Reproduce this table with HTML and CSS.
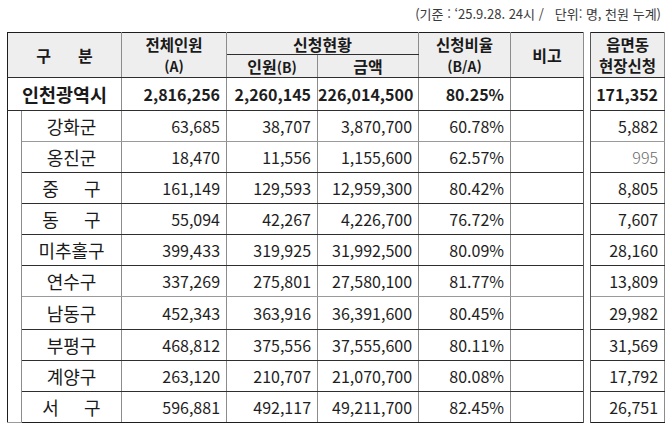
FILE: index.html
```html
<!DOCTYPE html>
<html lang="ko">
<head>
<meta charset="utf-8">
<title>신청현황</title>
<link rel="stylesheet" href="styles.css">
</head>
<body>
<div class="page">
  <p class="note">(기준 : ‘25.9.28. 24시 /&nbsp;&nbsp;&nbsp;단위: 명, 천원 누계)</p>
  <table class="stats">
    <colgroup>
      <col class="c-indent">
      <col class="c-name">
      <col class="c-total">
      <col class="c-people">
      <col class="c-amount">
      <col class="c-ratio">
      <col class="c-note">
      <col class="c-gap">
      <col class="c-site">
    </colgroup>
    <tbody>
      <tr class="h1">
        <th class="hd outer-l" colspan="2" rowspan="2">구&nbsp;&nbsp;&nbsp;&nbsp;&nbsp;&nbsp;분</th>
        <th class="hd two" rowspan="2">전체인원<br><span class="lat">(A)</span></th>
        <th class="hd" colspan="2">신청현황</th>
        <th class="hd two" rowspan="2">신청비율<br><span class="lat">(B/A)</span></th>
        <th class="hd" rowspan="2">비고</th>
        <td class="gap" rowspan="13"></td>
        <th class="hd two" rowspan="2">읍면동<br>현장신청</th>
      </tr>
      <tr class="h2">
        <th class="hd">인원<span class="lat">(B)</span></th>
        <th class="hd">금액</th>
      </tr>
      <tr class="total">
        <th class="name big outer-l" colspan="2">인천광역시</th>
        <td>2,816,256</td>
        <td>2,260,145</td>
        <td>226,014,500</td>
        <td>80.25%</td>
        <td class="empty"></td>
        <td>171,352</td>
      </tr>
      <tr class="row light">
        <td class="indent outer-l" rowspan="10"></td>
        <th class="name">강화군</th>
        <td>63,685</td>
        <td>38,707</td>
        <td>3,870,700</td>
        <td>60.78%</td>
        <td class="empty"></td>
        <td>5,882</td>
      </tr>
      <tr class="row">
        <th class="name">옹진군</th>
        <td>18,470</td>
        <td>11,556</td>
        <td>1,155,600</td>
        <td>62.57%</td>
        <td class="empty"></td>
        <td class="thin">995</td>
      </tr>
      <tr class="row">
        <th class="name">중&nbsp;&nbsp;&nbsp;&nbsp;&nbsp;구</th>
        <td>161,149</td>
        <td>129,593</td>
        <td>12,959,300</td>
        <td>80.42%</td>
        <td class="empty"></td>
        <td>8,805</td>
      </tr>
      <tr class="row">
        <th class="name">동&nbsp;&nbsp;&nbsp;&nbsp;&nbsp;구</th>
        <td>55,094</td>
        <td>42,267</td>
        <td>4,226,700</td>
        <td>76.72%</td>
        <td class="empty"></td>
        <td>7,607</td>
      </tr>
      <tr class="row">
        <th class="name">미추홀구</th>
        <td>399,433</td>
        <td>319,925</td>
        <td>31,992,500</td>
        <td>80.09%</td>
        <td class="empty"></td>
        <td>28,160</td>
      </tr>
      <tr class="row light">
        <th class="name">연수구</th>
        <td>337,269</td>
        <td>275,801</td>
        <td>27,580,100</td>
        <td>81.77%</td>
        <td class="empty"></td>
        <td>13,809</td>
      </tr>
      <tr class="row tall">
        <th class="name">남동구</th>
        <td>452,343</td>
        <td>363,916</td>
        <td>36,391,600</td>
        <td>80.45%</td>
        <td class="empty"></td>
        <td>29,982</td>
      </tr>
      <tr class="row">
        <th class="name">부평구</th>
        <td>468,812</td>
        <td>375,556</td>
        <td>37,555,600</td>
        <td>80.11%</td>
        <td class="empty"></td>
        <td>31,569</td>
      </tr>
      <tr class="row">
        <th class="name">계양구</th>
        <td>263,120</td>
        <td>210,707</td>
        <td>21,070,700</td>
        <td>80.08%</td>
        <td class="empty"></td>
        <td>17,792</td>
      </tr>
      <tr class="row last">
        <th class="name">서&nbsp;&nbsp;&nbsp;&nbsp;&nbsp;구</th>
        <td>596,881</td>
        <td>492,117</td>
        <td>49,211,700</td>
        <td>82.45%</td>
        <td class="empty"></td>
        <td>26,751</td>
      </tr>
    </tbody>
  </table>
</div>
</body>
</html>
```

FILE: styles.css
```css
html, body {
  margin: 0;
  padding: 0;
  background: #ffffff;
}

body {
  font-family: "Noto Sans CJK KR", "Noto Sans", sans-serif;
  color: #1e1e1e;
}

.page {
  padding: 5px 0 0 7px;
}

.note {
  margin: 0;
  height: 27px;
  padding-right: 9px;
  text-align: right;
  font-size: 13px;
  line-height: 17px;
  color: #3a3a3a;
}

.stats {
  border-collapse: collapse;
  table-layout: fixed;
  width: 657px;
}

.c-indent { width: 14px; }
.c-name { width: 100px; }
.c-total { width: 105px; }
.c-people { width: 91px; }
.c-amount { width: 101px; }
.c-ratio { width: 92px; }
.c-note { width: 73px; }
.c-gap { width: 7px; }
.c-site { width: 74px; }

.stats th,
.stats td {
  border-top: 1px solid #2e2e2e;
  border-bottom: 1px solid #2e2e2e;
  border-left: 1px solid #8c8c8c;
  border-right: 1px solid #8c8c8c;
  padding: 0 6px 0 0;
  text-align: right;
  font-size: 16px;
  line-height: 20px;
  font-weight: 400;
  white-space: nowrap;
}

.stats .hd {
  background: #eeeeee;
  text-align: center;
  padding: 0;
  font-size: 16px;
  line-height: 20px;
  font-weight: 700;
  color: #1a1a1a;
}

.stats .hd.two {
  font-size: 15.5px;
  line-height: 21px;
}

.stats .hd .lat {
  font-size: 14px;
}

.h1 { height: 22px; }
.h2 { height: 23px; }
.total { height: 33px; }
.row { height: 31px; }
.row.tall { height: 33px; }
.row.light th,
.row.light td {
  border-bottom-color: #9a9a9a;
}

.stats .outer-l {
  border-left: 1px solid #1e1e1e;
}

.stats .h1 th {
  border-top: 1px solid #1e1e1e;
}

.stats .total td,
.stats .total th {
  font-weight: 700;
  font-size: 16px;
}

.stats .name {
  text-align: center;
  padding: 0;
  font-size: 18px;
  font-weight: 400;
  color: #1a1a1a;
}

.stats .name.big {
  font-size: 18.5px;
  font-weight: 700;
}

.stats .indent {
  padding: 0;
  border-bottom: 1px solid #1e1e1e;
}

.stats .last td,
.stats .last th {
  border-bottom: 1px solid #1e1e1e;
}

.stats .gap {
  padding: 0;
  border-top: none;
  border-bottom: none;
  border-left: 1px solid #555555;
  border-right: 1px solid #555555;
  background: #ffffff;
}

.stats .thin {
  color: #6a6a6a;
  font-weight: 300;
}
```
